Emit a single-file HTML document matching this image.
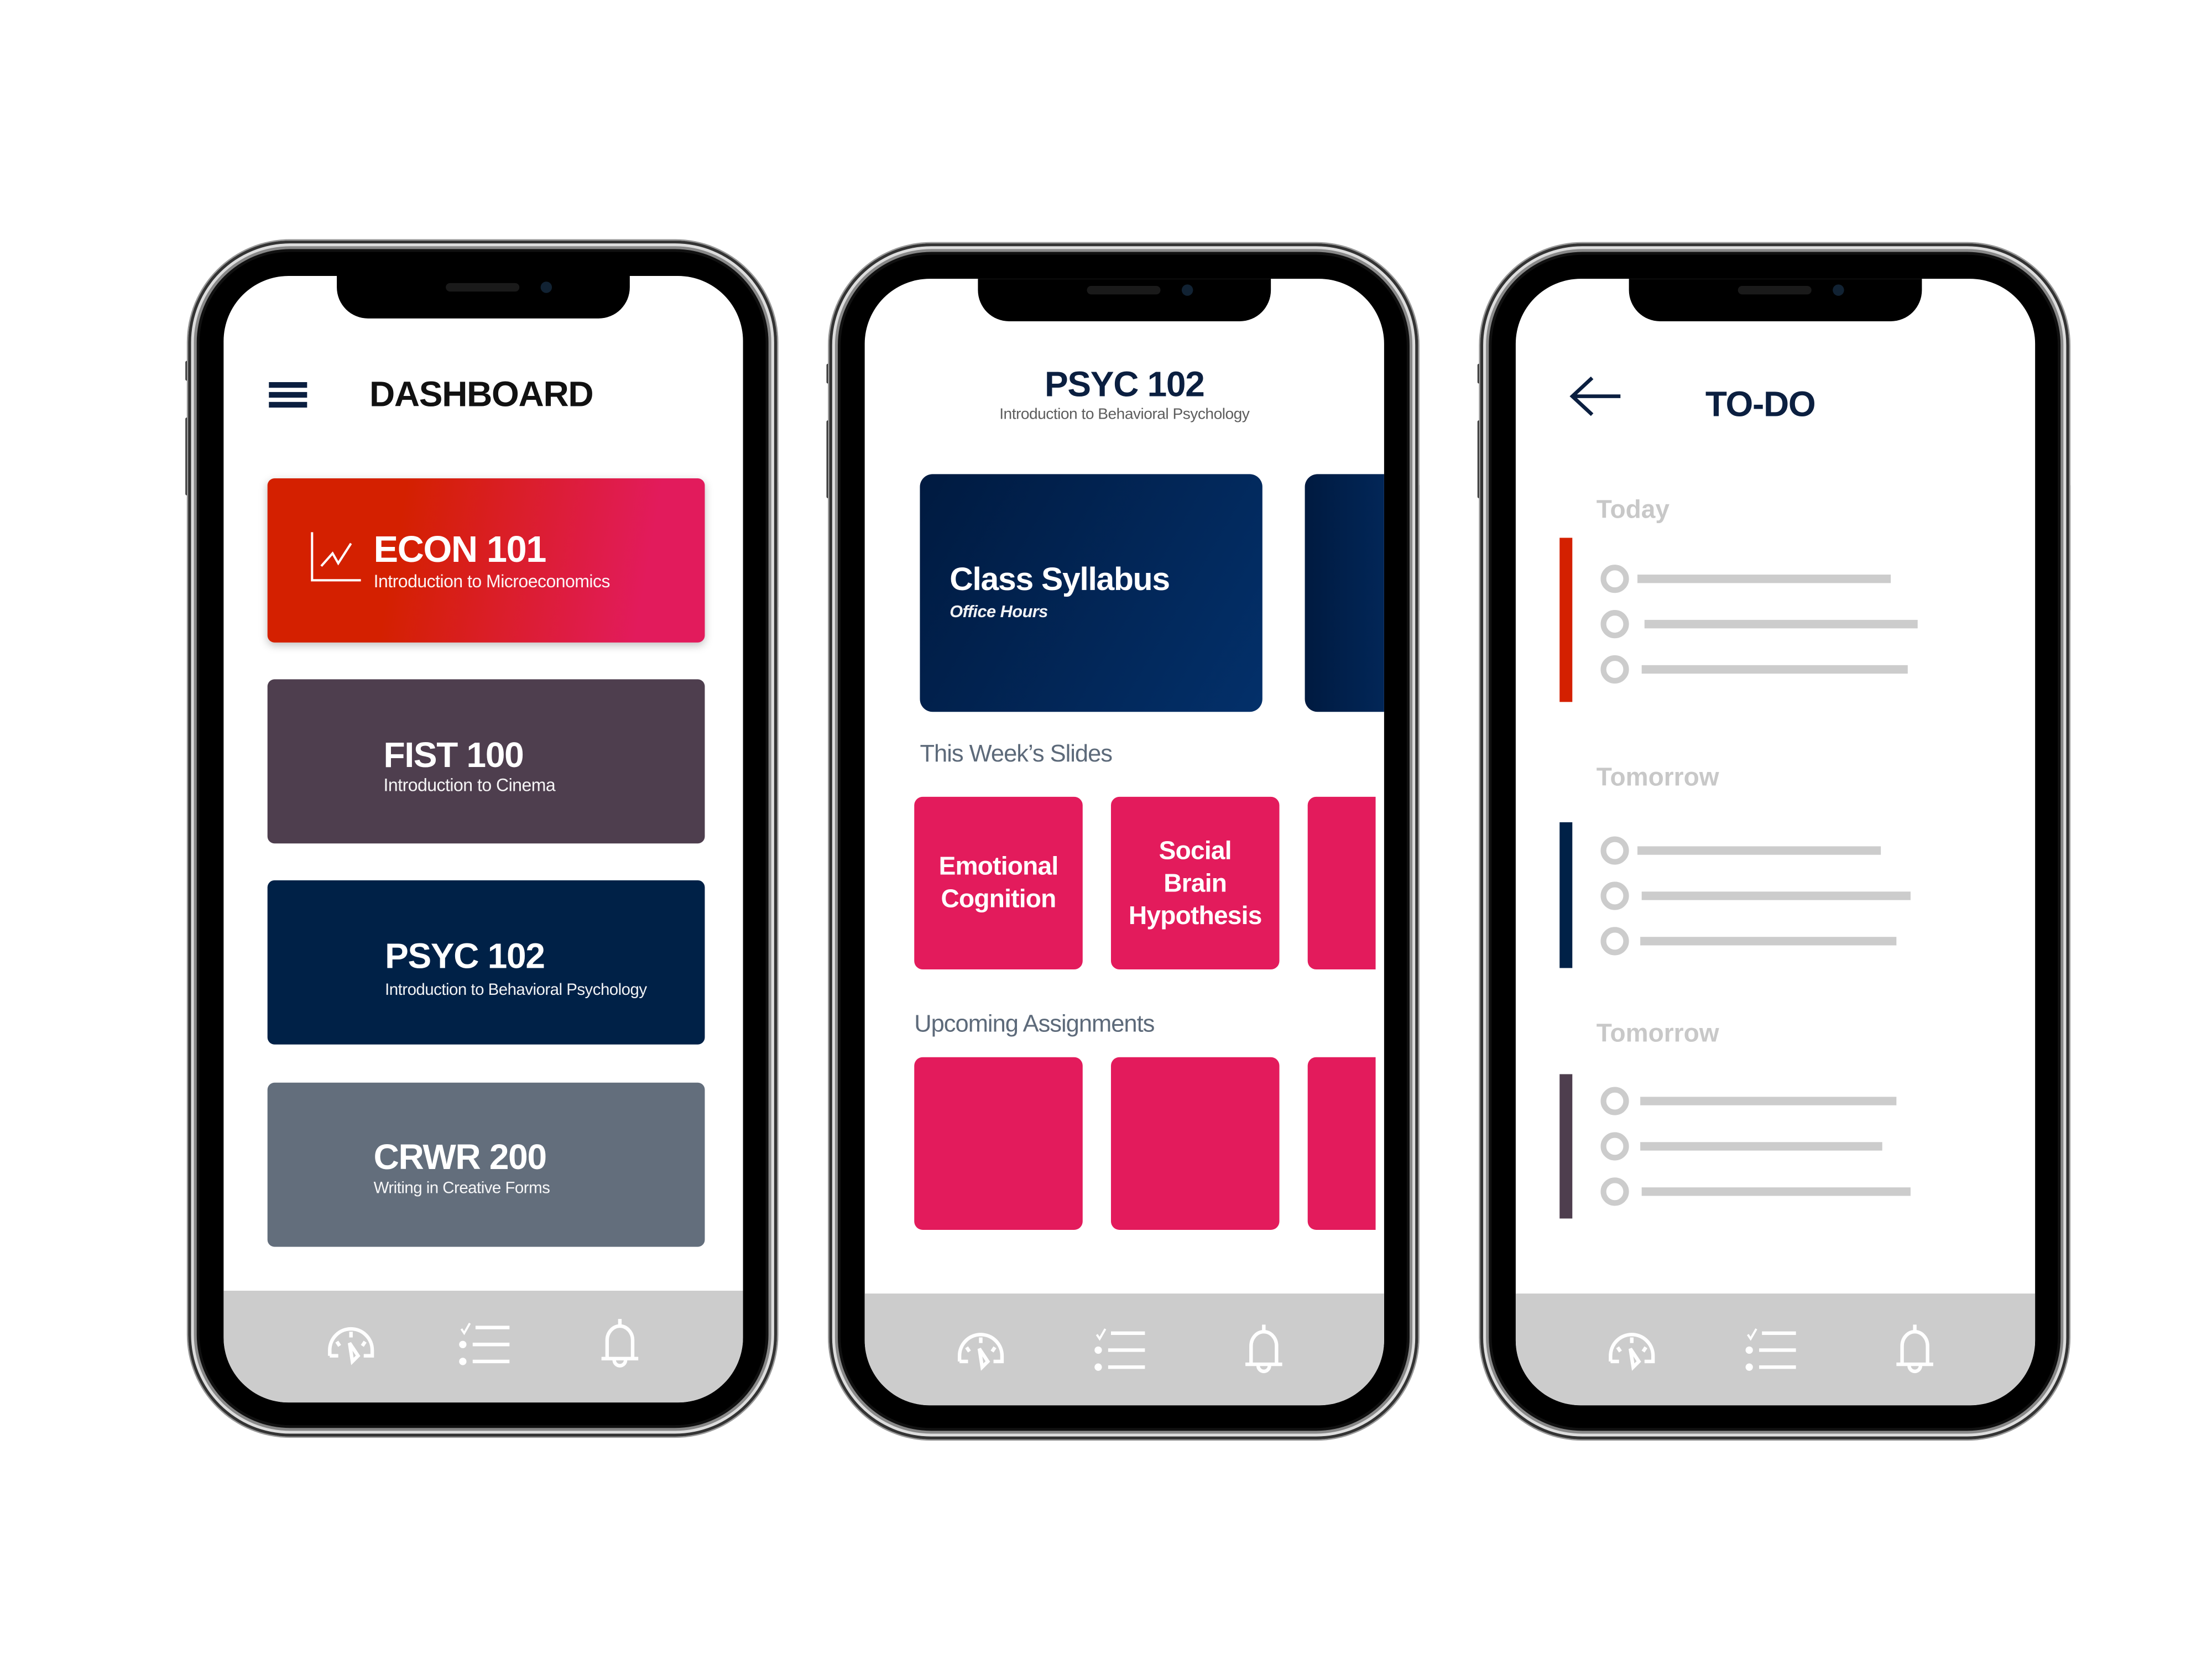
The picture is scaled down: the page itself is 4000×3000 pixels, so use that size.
<!DOCTYPE html>
<html><head><meta charset="utf-8"><style>
*{margin:0;padding:0;box-sizing:border-box}
html,body{width:4000px;height:3000px;background:#fff;overflow:hidden}
#w{position:absolute;left:0;top:0;width:1563px;height:1172px;transform:scale(2.5592);transform-origin:0 0;font-family:"Liberation Sans",sans-serif}
.ph{position:absolute;width:416px;height:845px;border-radius:72px;background:#000;box-shadow:inset 0 0 0 2px #333,inset 0 0 0 4px #ddd,inset 0 0 0 6px #888,inset 0 0 0 8px #111,0 0 0 1px #999}
.btn{position:absolute;width:3px;background:#333;border-radius:1px}
.scr{position:absolute;left:25px;top:25px;width:367px;height:796px;border-radius:46px;background:#fff;overflow:hidden}
.notch{position:absolute;left:80px;top:-2px;width:207px;height:32px;background:#000;border-radius:0 0 22px 22px}
.notch:before{content:"";position:absolute;left:77px;top:7px;width:52px;height:6px;background:#1a1a1a;border-radius:3px}
.notch:after{content:"";position:absolute;left:144px;top:6px;width:8px;height:8px;background:#123;border-radius:50%}
.bar{position:absolute;left:0;right:0;bottom:0;height:79px;background:#ccc}
.ab{position:absolute}
.card{position:absolute;border-radius:5px;color:#fff}
.t{position:absolute;font-weight:bold;font-size:26px;white-space:nowrap;line-height:1;letter-spacing:-0.5px}
.s{position:absolute;font-size:12.5px;white-space:nowrap;line-height:1;font-weight:300;opacity:.95;letter-spacing:-0.2px}
.pk{position:absolute;background:#e31b5c;border-radius:6px;color:#fff;font-weight:bold;font-size:18px;line-height:23px;text-align:center;display:flex;align-items:center;justify-content:center;letter-spacing:-0.3px}
.hd{position:absolute;font-size:17px;color:#5d6a7a;white-space:nowrap;letter-spacing:-0.4px}
.lb{position:absolute;font-size:18px;color:#c8c8c8;font-weight:bold;white-space:nowrap}
.cb{position:absolute;width:20px;height:20px;border:4px solid #ccc;border-radius:50%}
.ln{position:absolute;height:5.5px;background:#ccc}
</style></head><body><div id="w">

<!-- Phone 1 -->
<div class="btn" style="left:131px;top:255px;height:14px"></div>
<div class="btn" style="left:131px;top:295px;height:55px"></div>
<div class="btn" style="left:547px;top:340px;height:90px"></div>
<div class="ph" style="left:133px;top:170px">
 <div class="scr">
  <div class="notch"></div>
  <div class="ab" style="left:32px;top:75px;width:27px;height:4px;background:#0b1f40"></div>
  <div class="ab" style="left:32px;top:82px;width:27px;height:4px;background:#0b1f40"></div>
  <div class="ab" style="left:32px;top:89px;width:27px;height:4px;background:#0b1f40"></div>
  <div class="t" style="left:103px;top:72px;color:#111;font-size:25px">DASHBOARD</div>
  <div class="card" style="left:31px;top:143px;width:309px;height:116px;background:linear-gradient(100deg,#d42000 30%,#e21b5c 85%);box-shadow:0 2px 6px rgba(0,0,0,.25)">
   <svg class="ab" style="left:30px;top:38px" width="38" height="36" viewBox="0 0 38 36"><path d="M1.5 0V34H36" fill="none" stroke="#fff" stroke-width="1.6"/><path d="M8 24L16 15L20 22L29 8" fill="none" stroke="#fff" stroke-width="1.6"/></svg>
   <div class="t" style="left:75px;top:37px;font-size:26px">ECON 101</div>
   <div class="s" style="left:75px;top:67px">Introduction to Microeconomics</div>
  </div>
  <div class="card" style="left:31px;top:285px;width:309px;height:116px;background:#4e3e4e">
   <div class="t" style="left:82px;top:42px;font-size:25px">FIST 100</div>
   <div class="s" style="left:82px;top:69px">Introduction to Cinema</div>
  </div>
  <div class="card" style="left:31px;top:427px;width:309px;height:116px;background:#002147">
   <div class="t" style="left:83px;top:42px;font-size:25px">PSYC 102</div>
   <div class="s" style="left:83px;top:73px;font-size:11.5px">Introduction to Behavioral Psychology</div>
  </div>
  <div class="card" style="left:31px;top:570px;width:309px;height:116px;background:#636e7c">
   <div class="t" style="left:75px;top:41px;font-size:25px">CRWR 200</div>
   <div class="s" style="left:75px;top:70px;font-size:11.5px">Writing in Creative Forms</div>
  </div>
  <div class="bar">
   <svg class="ab" style="left:71px;top:20px" width="38" height="36" viewBox="0 0 38 36"><g fill="none" stroke="#fff" stroke-width="2.5"><path d="M4 26V22A15 15 0 0 1 34 22V26H28M10 26H4"/><path d="M19 9V13M9 16L11 19M29 16L27 19"/><path d="M18 17L20 30L24 26Z"/></g></svg>
   <svg class="ab" style="left:166px;top:22px" width="38" height="32" viewBox="0 0 38 32"><g fill="none" stroke="#fff"><path d="M2 5L4 8L8 1" stroke-width="1.5"/><path d="M12 4H36M10 16H36M10 28H36" stroke-width="2.5"/></g><circle cx="3" cy="16" r="2.6" fill="#fff"/><circle cx="3" cy="28" r="2.6" fill="#fff"/></svg>
   <svg class="ab" style="left:265px;top:19px" width="30" height="38" viewBox="0 0 30 38"><g fill="none" stroke="#fff" stroke-width="2.5"><path d="M15 1V6M6 28V16A9 10 0 0 1 24 16V28M2 29H28M11 30A4 4 0 0 0 19 30"/></g></svg>
  </div>
 </div>
</div>

<!-- Phone 2 -->
<div class="btn" style="left:584px;top:257px;height:14px"></div>
<div class="btn" style="left:584px;top:297px;height:55px"></div>
<div class="btn" style="left:1000px;top:342px;height:90px"></div>
<div class="ph" style="left:586px;top:172px">
 <div class="scr">
  <div class="notch"></div>
  <div class="t" style="left:0;width:367px;text-align:center;top:63px;color:#0b1f40;font-size:25px">PSYC 102</div>
  <div class="s" style="left:0;width:367px;text-align:center;top:91px;color:#555;font-size:11px">Introduction to Behavioral Psychology</div>
  <div class="card" style="left:39px;top:138px;width:242px;height:168px;border-radius:9px;background:linear-gradient(120deg,#001a40,#03306a)">
   <div class="t" style="left:21px;top:63px;font-size:23px">Class Syllabus</div>
   <div class="s" style="left:21px;top:91px;font-size:12px;font-style:italic;font-weight:bold">Office Hours</div>
  </div>
  <div class="card" style="left:311px;top:138px;width:100px;height:168px;border-radius:9px;background:linear-gradient(90deg,#001a40,#03306a)"></div>
  <div class="hd" style="left:39px;top:326px">This Week’s Slides</div>
  <div class="pk" style="left:35px;top:366px;width:119px;height:122px">Emotional<br>Cognition</div>
  <div class="pk" style="left:174px;top:366px;width:119px;height:122px">Social<br>Brain<br>Hypothesis</div>
  <div class="pk" style="left:313px;top:366px;width:48px;height:122px;border-radius:6px 0 0 6px"></div>
  <div class="hd" style="left:35px;top:517px">Upcoming Assignments</div>
  <div class="pk" style="left:35px;top:550px;width:119px;height:122px"></div>
  <div class="pk" style="left:174px;top:550px;width:119px;height:122px"></div>
  <div class="pk" style="left:313px;top:550px;width:48px;height:122px;border-radius:6px 0 0 6px"></div>
  <div class="bar">
   <svg class="ab" style="left:63px;top:22px" width="38" height="36" viewBox="0 0 38 36"><g fill="none" stroke="#fff" stroke-width="2.5"><path d="M4 26V22A15 15 0 0 1 34 22V26H28M10 26H4"/><path d="M19 9V13M9 16L11 19M29 16L27 19"/><path d="M18 17L20 30L24 26Z"/></g></svg>
   <svg class="ab" style="left:162px;top:24px" width="38" height="32" viewBox="0 0 38 32"><g fill="none" stroke="#fff"><path d="M2 5L4 8L8 1" stroke-width="1.5"/><path d="M12 4H36M10 16H36M10 28H36" stroke-width="2.5"/></g><circle cx="3" cy="16" r="2.6" fill="#fff"/><circle cx="3" cy="28" r="2.6" fill="#fff"/></svg>
   <svg class="ab" style="left:267px;top:21px" width="30" height="38" viewBox="0 0 30 38"><g fill="none" stroke="#fff" stroke-width="2.5"><path d="M15 1V6M6 28V16A9 10 0 0 1 24 16V28M2 29H28M11 30A4 4 0 0 0 19 30"/></g></svg>
  </div>
 </div>
</div>

<!-- Phone 3 -->
<div class="btn" style="left:1044px;top:257px;height:14px"></div>
<div class="btn" style="left:1044px;top:297px;height:55px"></div>
<div class="btn" style="left:1460px;top:342px;height:90px"></div>
<div class="ph" style="left:1046px;top:172px">
 <div class="scr">
  <div class="notch"></div>
  <svg class="ab" style="left:38px;top:69px" width="40" height="30" viewBox="0 0 40 30"><g fill="none" stroke="#0b1f40" stroke-width="2.6"><path d="M2 14H36M16 1L2 14L16 27"/></g></svg>
  <div class="t" style="left:134px;top:77px;color:#0b1f40;font-size:25px">TO-DO</div>
  <div class="lb" style="left:57px;top:153px">Today</div>
  <div class="ab" style="left:31px;top:183px;width:9px;height:116px;background:#d42000"></div>
  <div class="cb" style="left:60px;top:202px"></div><div class="ln" style="left:86px;top:209px;width:179px"></div>
  <div class="cb" style="left:60px;top:234px"></div><div class="ln" style="left:91px;top:241px;width:193px"></div>
  <div class="cb" style="left:60px;top:266px"></div><div class="ln" style="left:89px;top:273px;width:188px"></div>
  <div class="lb" style="left:57px;top:342px">Tomorrow</div>
  <div class="ab" style="left:31px;top:384px;width:9px;height:103px;background:#002147"></div>
  <div class="cb" style="left:60px;top:394px"></div><div class="ln" style="left:86px;top:401px;width:172px"></div>
  <div class="cb" style="left:60px;top:426px"></div><div class="ln" style="left:89px;top:433px;width:190px"></div>
  <div class="cb" style="left:60px;top:458px"></div><div class="ln" style="left:88px;top:465px;width:181px"></div>
  <div class="lb" style="left:57px;top:523px">Tomorrow</div>
  <div class="ab" style="left:31px;top:562px;width:9px;height:102px;background:#4e3e4e"></div>
  <div class="cb" style="left:60px;top:571px"></div><div class="ln" style="left:88px;top:578px;width:181px"></div>
  <div class="cb" style="left:60px;top:603px"></div><div class="ln" style="left:88px;top:610px;width:171px"></div>
  <div class="cb" style="left:60px;top:635px"></div><div class="ln" style="left:89px;top:642px;width:190px"></div>
  <div class="bar">
   <svg class="ab" style="left:63px;top:22px" width="38" height="36" viewBox="0 0 38 36"><g fill="none" stroke="#fff" stroke-width="2.5"><path d="M4 26V22A15 15 0 0 1 34 22V26H28M10 26H4"/><path d="M19 9V13M9 16L11 19M29 16L27 19"/><path d="M18 17L20 30L24 26Z"/></g></svg>
   <svg class="ab" style="left:162px;top:24px" width="38" height="32" viewBox="0 0 38 32"><g fill="none" stroke="#fff"><path d="M2 5L4 8L8 1" stroke-width="1.5"/><path d="M12 4H36M10 16H36M10 28H36" stroke-width="2.5"/></g><circle cx="3" cy="16" r="2.6" fill="#fff"/><circle cx="3" cy="28" r="2.6" fill="#fff"/></svg>
   <svg class="ab" style="left:267px;top:21px" width="30" height="38" viewBox="0 0 30 38"><g fill="none" stroke="#fff" stroke-width="2.5"><path d="M15 1V6M6 28V16A9 10 0 0 1 24 16V28M2 29H28M11 30A4 4 0 0 0 19 30"/></g></svg>
  </div>
 </div>
</div>

</div></body></html>
